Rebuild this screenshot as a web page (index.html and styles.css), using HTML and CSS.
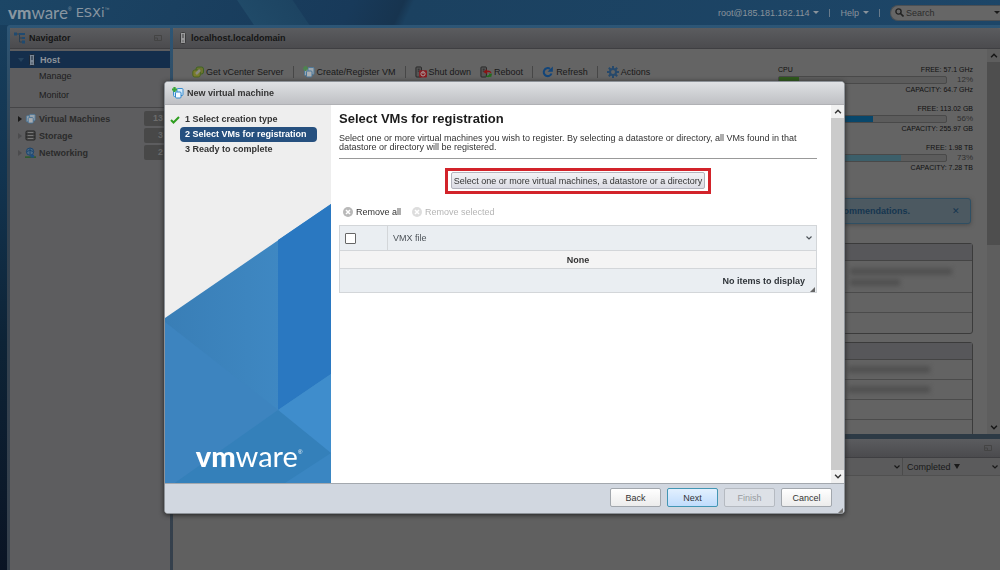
FILE: index.html
```html
<!DOCTYPE html>
<html lang="en">
<head>
<meta charset="utf-8">
<title>VMware ESXi</title>
<link rel="stylesheet" href="styles.css">
</head>
<body>
<svg class="defs" aria-hidden="true">
  <symbol id="i-vm" viewBox="0 0 12 12">
    <rect x="1.500" y="3" width="5.500" height="6.500" rx="1" fill="#cfe6f7" stroke="#3b8fd0"/>
    <rect x="5" y="1.500" width="6" height="7" rx="1" fill="#d6ebfa" stroke="#3b8fd0"/>
    <rect x="3.500" y="5" width="5.500" height="6" rx="1" fill="#f4faff" stroke="#2f86cc"/>
  </symbol>
  <symbol id="i-vm-new" viewBox="0 0 12 12">
    <use href="#i-vm"/>
    <path d="M2.500 0v5M0 2.500h5" stroke="#37a537" stroke-width="2.200"/>
  </symbol>
  <symbol id="i-host" viewBox="0 0 8 12">
    <rect x="1.500" y=".5" width="5" height="11" rx="1" fill="#ddd" stroke="#222"/>
    <path d="M3 3h2M3 5h2M3.500 9h1" stroke="#222"/>
  </symbol>
  <symbol id="i-chev" viewBox="0 0 8 6">
    <path d="M1.500 1.500L4 4l2.500-2.500" fill="none" stroke="currentColor" stroke-width="1.200"/>
  </symbol>
  <symbol id="i-x" viewBox="0 0 10 10">
    <circle cx="5" cy="5" r="5" fill="currentColor"/>
    <path d="M3 3l4 4M7 3L3 7" stroke="#fff" stroke-width="1.500"/>
  </symbol>
  <symbol id="i-window" viewBox="0 0 8 8">
    <path d="M.5 1.500h7v5h-7zM.5 4h3v2.500" fill="none" stroke="currentColor"/>
  </symbol>
  <symbol id="i-grip" viewBox="0 0 5 5"><path d="M5 0v5H0z" fill="currentColor"/></symbol>
</svg>

<div class="app">
  <header class="topbar">
    <div class="brand"><span class="wordmark"><b>vm</b>ware</span><sup>®</sup><span class="product">ESXi</span><sup>™</sup></div>
    <nav class="usernav">
      <button class="linkbtn">root@185.181.182.114 <i class="caret"></i></button>
      <span class="bar"></span>
      <button class="linkbtn">Help <i class="caret"></i></button>
      <span class="bar"></span>
    </nav>
    <label class="search">
      <svg width="9" height="9" viewBox="0 0 9 9"><circle cx="3.500" cy="3.500" r="2.600" fill="none" stroke="#222" stroke-width="1.400"/><path d="M5.500 5.500L8.500 8.500" stroke="#222" stroke-width="1.600"/></svg>
      <input type="text" placeholder="Search" aria-label="Search">
      <i class="caret dark"></i>
    </label>
  </header>

  <div class="frame">
    <aside class="navigator">
      <h2 class="panel-head">
        <svg width="12" height="12" viewBox="0 0 12 12"><path d="M2 2h6M5.500 2v8h3M5.500 6h3" fill="none" stroke="#2b3f50"/><path d="M0 .5h3v3H0zM5 1h6v2H5zM8 5h3v2H8zM8 8.500h3v3H8z" fill="#1f4a70"/></svg>
        Navigator
        <svg class="push" width="8" height="8"><use href="#i-window"/></svg>
      </h2>
      <ul class="tree">
        <li class="node selected"><i class="tri down"></i><svg class="dim" width="8" height="12"><use href="#i-host"/></svg><a>Host</a></li>
        <li class="leaf"><a>Manage</a></li>
        <li class="leaf"><a>Monitor</a></li>
      </ul>
      <ul class="tree groups">
        <li class="node"><i class="tri"></i><svg class="dim" width="11" height="11"><use href="#i-vm"/></svg><a>Virtual Machines</a><span class="count">13</span></li>
        <li class="node"><i class="tri faint"></i><svg width="11" height="11" viewBox="0 0 11 11"><rect x="1" y="1" width="9" height="9" rx="1" fill="#555" stroke="#222"/><path d="M1 4h9M1 7h9" stroke="#222"/><path d="M3 2.500h5M3 5.500h5M3 8.500h5" stroke="#777"/></svg><a>Storage</a><span class="count">3</span></li>
        <li class="node"><i class="tri faint"></i><svg width="11" height="12" viewBox="0 0 12 12"><circle cx="5.500" cy="4.500" r="4" fill="#4b6a86" stroke="#17426b"/><path d="M2 4.500q3-3 7 0M5.500 1v7" fill="none" stroke="#17426b"/><path d="M0 10.500h12" stroke="#255a25" stroke-width="1.500"/><path d="M6 8h4v3H6z" fill="#1f4e80"/></svg><a>Networking</a><span class="count">2</span></li>
      </ul>
    </aside>

    <main class="main">
      <h1 class="panel-head"><svg class="dim" width="8" height="12"><use href="#i-host"/></svg><span>localhost.localdomain</span></h1>
      <div class="workspace">
        <div class="scroll">
          <div class="overview">
            <div class="toolbar">
              <button><svg width="12" height="12" viewBox="0 0 12 12"><rect x="4" y="1" width="7.500" height="7" rx="2" fill="#6d7430" stroke="#3f6322"/><rect x=".8" y="4" width="7.500" height="7" rx="2" fill="#7a7c2c" stroke="#4a6420"/><path d="M4 8l4-4" stroke="#8a8a80" stroke-width="2.500"/></svg>Get vCenter Server</button>
              <span class="bar"></span>
              <button><svg class="dim" width="12" height="12"><use href="#i-vm-new"/></svg>Create/Register VM</button>
              <span class="bar"></span>
              <button><svg width="12" height="12" viewBox="0 0 13 12"><rect x="1" y=".5" width="6" height="11" rx="1" fill="#555" stroke="#252525"/><path d="M3 3h2M3 5h2" stroke="#252525"/><rect x="4.500" y="4" width="8.500" height="8" rx="1" fill="#8a1b20"/><circle cx="8.700" cy="8" r="2.300" fill="none" stroke="#aaa"/><path d="M8.700 5.500v2.500" stroke="#aaa"/></svg>Shut down</button>
              <button><svg width="12" height="12" viewBox="0 0 13 12"><rect x="1" y=".5" width="6" height="11" rx="1" fill="#555" stroke="#252525"/><path d="M3 3h2M3 5h2" stroke="#252525"/><path d="M3.500 6l3.500-3 .5 1.500c2.500-.5 4.500.5 5 3-2-1.500-3-1.500-5-1l.5 2z" fill="#8a1414"/><path d="M5 9q2 2 5 0l-.5-1.500L13 8l-1 4-1-1c-2 1-4 1-6-2z" fill="#236b1d"/></svg>Reboot</button>
              <span class="bar"></span>
              <button><svg width="12" height="12" viewBox="0 0 12 12"><path d="M9.500 7.500A4 4 0 1 1 8 2.800" fill="none" stroke="#12457a" stroke-width="2"/><path d="M10.800.5v5.300H5.500z" fill="#12457a"/></svg>Refresh</button>
              <span class="bar"></span>
              <button><svg width="12" height="12" viewBox="0 0 12 12"><path d="M6 0v12M0 6h12M1.800 1.800l8.400 8.400M10.200 1.800l-8.400 8.400" stroke="#27496b" stroke-width="2"/><circle cx="6" cy="6" r="3" fill="#646464" stroke="#27496b" stroke-width="2"/></svg>Actions</button>
            </div>
            <div class="meters">
              <div class="meter"><div class="mrow"><span>CPU</span><span>FREE: 57.1 GHz</span></div><div class="mbar"><div class="track"><div class="fill green" style="width:12%"></div></div><span>12%</span></div><div class="mrow end"><span>CAPACITY: 64.7 GHz</span></div></div>
              <div class="meter"><div class="mrow end"><span>FREE: 113.02 GB</span></div><div class="mbar"><div class="track"><div class="fill blue" style="width:56%"></div></div><span>56%</span></div><div class="mrow end"><span>CAPACITY: 255.97 GB</span></div></div>
              <div class="meter"><div class="mrow end"><span>FREE: 1.98 TB</span></div><div class="mbar"><div class="track"><div class="fill teal" style="width:73%"></div></div><span>73%</span></div><div class="mrow end"><span>CAPACITY: 7.28 TB</span></div></div>
            </div>
          </div>
          <div class="notice"><span>commendations.</span><button aria-label="Dismiss">✕</button></div>
          <section class="card"><div class="card-head"></div><div class="row tall"><i class="smear wide"></i><i class="smear"></i></div><div class="row"></div><div class="row"></div></section>
          <section class="card"><div class="card-head"></div><div class="row"><i class="smear mid"></i></div><div class="row"><i class="smear mid"></i></div><div class="row"></div><div class="row"></div></section>
        </div>
        <div class="vscroll dimmed"><svg class="up" width="10" height="7"><use href="#i-chev"/></svg><div class="thumb"></div><svg width="10" height="7"><use href="#i-chev"/></svg></div>
      </div>
      <section class="tasks">
        <div class="panel-head tasks-head"><svg class="push" width="8" height="8"><use href="#i-window"/></svg></div>
        <div class="tasks-cols"><div class="tcol first"><svg width="8" height="6"><use href="#i-chev"/></svg></div><div class="tcol"><span class="sorted">Completed <i class="caret dark"></i></span><svg width="8" height="6"><use href="#i-chev"/></svg></div></div>
      </section>
    </main>
  </div>
</div>

<div class="overlay">
  <div class="dialog" role="dialog" aria-labelledby="dlg-title">
    <div class="dialog-head" id="dlg-title"><svg width="12" height="12"><use href="#i-vm-new"/></svg>New virtual machine</div>
    <div class="dialog-body">
      <div class="wizard">
        <ol class="steps">
          <li><svg width="10" height="8" viewBox="0 0 10 8"><path d="M1 4l2.500 2.500L9 1" fill="none" stroke="#2e9e1f" stroke-width="2"/></svg><span>1 Select creation type</span></li>
          <li class="active"><span>2 Select VMs for registration</span></li>
          <li><span>3 Ready to complete</span></li>
        </ol>
        <div class="art">
          <svg viewBox="0 0 166 279" preserveAspectRatio="none">
            <defs><linearGradient id="g1"><stop offset="0" stop-color="#397eb6"/><stop offset="1" stop-color="#418cc8"/></linearGradient></defs>
            <path d="M0 114L166 0V279H0z" fill="url(#g1)"/>
            <path d="M0 118L113 206 10 279H0z" fill="#3d84bf"/>
            <path d="M113 36L166 0V170L113 206z" fill="#2a78c1"/>
            <path d="M113 206L166 170V249z" fill="#3f8dcc"/>
            <path d="M113 206L166 249V279H10z" fill="#3480ba"/>
            <path d="M166 249V279H120z" fill="#3a86c2"/>
          </svg>
          <div class="artlogo"><span class="wordmark"><b>vm</b>ware</span><sup>®</sup></div>
        </div>
      </div>
      <div class="pane">
        <h3>Select VMs for registration</h3>
        <p>Select one or more virtual machines you wish to register. By selecting a datastore or directory, all VMs found in that datastore or directory will be registered.</p>
        <div class="highlight"><button class="pick">Select one or more virtual machines, a datastore or a directory</button></div>
        <div class="actions">
          <button><svg width="10" height="10"><use href="#i-x"/></svg>Remove all</button>
          <button disabled><svg width="10" height="10"><use href="#i-x"/></svg>Remove selected</button>
        </div>
        <table class="grid">
          <thead><tr><th class="check"><input type="checkbox" aria-label="Select all"></th><th><div class="th"><span>VMX file</span><svg width="8" height="6"><use href="#i-chev"/></svg></div></th></tr></thead>
          <tbody><tr><td colspan="2">None</td></tr></tbody>
          <tfoot><tr><td colspan="2"><div class="tf"><span>No items to display</span><svg width="5" height="5"><use href="#i-grip"/></svg></div></td></tr></tfoot>
        </table>
      </div>
      <div class="vscroll"><svg class="up" width="10" height="7"><use href="#i-chev"/></svg><div class="thumb full"></div><svg width="10" height="7"><use href="#i-chev"/></svg></div>
    </div>
    <div class="dialog-foot">
      <button>Back</button><button class="primary">Next</button><button disabled>Finish</button><button>Cancel</button>
      <svg class="grip" width="5" height="5"><use href="#i-grip"/></svg>
    </div>
  </div>
</div>
</body>
</html>
```
FILE: styles.css
```css
* { box-sizing: border-box; }
body { margin: 0; font: 9px/12px "Liberation Sans", Arial, sans-serif; color: #191919; overflow: hidden; }
h1, h2, h3, p, ul, ol { margin: 0; padding: 0; font-size: inherit; }
ul, ol { list-style: none; }
button { font: inherit; color: inherit; background: none; border: 0; padding: 0; white-space: nowrap; }
svg { flex: none; display: block; }
.defs { position: absolute; width: 0; height: 0; }
.dim { opacity: .5; }
.push { margin-left: auto; color: #444; }

.app { height: 100vh; display: flex; flex-direction: column; background: linear-gradient(#19405f, #123450 30%, #0d2336 60%, #0a1424); }

/* top bar */
.topbar { flex: none; height: 25px; display: flex; align-items: center; padding-left: 8px; background: linear-gradient(56deg, transparent 210px, #204a68 211px, #1d4462 256px, transparent 257px), linear-gradient(115deg, #1c4666, #183a5a 35%, #17344f 40%, #1b4160 41%, #1d4668); color: #8a939b; }
.brand { display: flex; align-items: center; flex: 1; color: #8996a1; }
.wordmark { font-family: Lato, sans-serif; font-size: 17px; line-height: 20px; }
.wordmark b { font-weight: 900; }
.brand sup { font-size: 5px; line-height: 5px; align-self: flex-start; padding-top: 4px; }
.product { font: 13px/20px "DejaVu Sans", sans-serif; margin-left: 4px; }
.usernav { display: flex; align-items: center; gap: 10px; padding-right: 10px; }
.linkbtn { display: flex; align-items: center; gap: 4px; }
.caret { width: 0; border: 3px solid transparent; border-top-color: currentColor; border-bottom: 0; }
.caret.dark { color: #1a1a1a; }
.bar { width: 1px; height: 8px; background: currentColor; opacity: .7; }
.search { display: flex; align-items: center; gap: 2px; width: 110px; height: 16px; padding-left: 4px; background: #666; border: 1px solid #4a4f54; border-right: 0; border-radius: 8px 0 0 8px; }
.search input { flex: 1; min-width: 0; border: 0; padding: 0; background: none; outline: 0; font: inherit; color: #222; }
.search input::placeholder { color: #2c2c2c; opacity: 1; }

/* frame */
.frame { flex: 1; min-height: 0; margin-left: 7px; padding: 3px 0 0 3px; border-radius: 3px 0 0 0; background: linear-gradient(#2d5676, #33414e 25%, #35404c); display: grid; grid-template-columns: 160px 1fr; gap: 3px; }
.panel-head { height: 21px; display: flex; align-items: center; gap: 3px; padding: 0 8px 0 4px; background: linear-gradient(#5b5c5f, #4b4b4e); border-bottom: 1px solid #3f3f42; font-weight: bold; color: #151515; border-radius: 3px 3px 0 0; }
.main .panel-head { gap: 4px; padding-left: 6px; }
.navigator { background: #5d5d5f; min-width: 0; overflow: hidden; }
.tree { padding-top: 2px; }
.node { height: 17px; display: flex; align-items: center; gap: 3px; padding-left: 8px; font-weight: bold; color: #2b2b2b; }
.node.selected { background: #142e4c; color: #8f949a; gap: 4px; }
.tri { width: 4px; border: 3px solid transparent; border-left: 4px solid #1a1a1a; border-right: 0; }
.tri.down { width: 6px; border: 3px solid transparent; border-top: 4px solid #26435e; border-bottom: 0; }
.tri.faint { border-left-color: #4c4c4e; }
.leaf { height: 19px; padding: 2px 0 0 29px; color: #1c1c1c; }
.groups { margin-top: 1px; border-top: 1px solid #454547; }
.count { margin-left: auto; width: 26px; height: 15px; padding-right: 7px; text-align: right; line-height: 15px; background: #484848; color: #6d6d6d; border-radius: 2px; }

/* main area */
.main { min-width: 0; display: flex; flex-direction: column; background: #606060; }
.workspace { height: 385px; display: flex; background: #646464; }
.scroll { flex: 1; min-width: 0; overflow: hidden; padding: 16px 14px 0 19px; }
.overview { display: flex; justify-content: space-between; }
.toolbar { display: flex; align-items: center; gap: 9px; height: 14px; }
.toolbar button { display: flex; align-items: center; gap: 2px; }
.toolbar .bar { height: 12px; background: #3a3a3a; }
.meters { width: 195px; display: grid; gap: 9px; }
.meter { height: 30px; display: grid; grid-template-rows: 9px 11px 10px; font-size: 7px; line-height: 9px; color: #111; }
.mrow { display: flex; justify-content: space-between; }
.mrow.end { justify-content: flex-end; }
.mbar { display: flex; align-items: center; gap: 10px; font-size: 8px; color: #2f2f2f; }
.track { flex: 1; height: 8px; background: #5c5c5c; border: 1px solid #494949; border-radius: 2px; }
.fill { height: 6px; }
.green { background: #2f5a1c; }
.blue { background: #08476b; }
.teal { background: #3c5f6a; }
.notice { height: 26px; margin: 25px 2px 19px 0; padding: 0 10px 0 0; display: flex; align-items: center; justify-content: flex-end; gap: 42px; background: #4c5961; border: 1px solid #2f4f63; border-radius: 3px; box-shadow: 0 1px 4px #4a4a4a; color: #163650; font-weight: bold; }
.notice button { font-weight: normal; }
.card { margin-bottom: 8px; border: 1px solid #3b3b3b; border-radius: 3px; background: #636363; }
.card-head { height: 17px; background: #57575a; border-bottom: 1px solid #444; }
.row { height: 20px; border-bottom: 1px solid #4b4b4b; display: flex; flex-direction: column; align-items: flex-end; justify-content: center; gap: 4px; }
.row:last-child { border-bottom: 0; }
.row.tall { height: 32px; }
.smear { width: 50px; height: 7px; margin-right: 72px; background: #515151; filter: blur(2px); }
.smear.wide { width: 102px; margin-right: 20px; }
.smear.mid { width: 82px; margin-right: 42px; }
.tasks { flex: 1; border-top: 5px solid #2d3a45; }
.tasks-head { height: 19px; border-radius: 0; }
.tasks-cols { display: flex; justify-content: flex-end; height: 18px; border-bottom: 1px solid #505050; background: #5b5b5c; }
.tcol { width: 98px; padding: 0 1px 0 4px; display: flex; align-items: center; justify-content: space-between; border-left: 1px solid #4b4b4b; }
.tcol.first { flex: 1; justify-content: flex-end; border-left: 0; }
.sorted { display: flex; align-items: center; gap: 3px; }
.sorted .caret { border-top-width: 5px; }

/* scroll bars */
.vscroll { flex: none; width: 13px; display: flex; flex-direction: column; align-items: center; background: #f1f1f1; color: #333; padding: 3px 0; gap: 3px; }
.vscroll .up { transform: rotate(180deg); }
.vscroll .thumb { width: 100%; height: 183px; background: #4e4e4e; margin-bottom: auto; }
.vscroll .thumb.full { flex: 1; height: auto; background: #cbcbcb; }
.vscroll.dimmed { background: #5e5e5e; color: #151515; }

/* dialog */
.overlay { position: fixed; inset: 0; padding: 81px 155px 56px 164px; display: flex; }
.dialog { flex: 1; min-width: 0; display: flex; flex-direction: column; border: 1px solid #8d9298; border-radius: 4px; overflow: hidden; background: #fff; box-shadow: 0 1px 5px #222; color: #333; }
.dialog-head { flex: none; height: 23px; display: flex; align-items: center; gap: 3px; padding-left: 7px; background: linear-gradient(#dfe1e4, #bfc0c4); border-bottom: 1px solid #b0b1b5; font-weight: bold; }
.dialog-body { flex: 1; min-height: 0; display: flex; }
.wizard { width: 166px; flex: none; display: flex; flex-direction: column; background: #eee; }
.steps { padding: 7px 14px 0 5px; font-weight: bold; line-height: 15px; white-space: nowrap; flex: 1; }
.steps li { display: flex; align-items: center; height: 15px; }
.steps span { flex: 1; padding-left: 5px; }
.steps li:not(.active) > span:first-child, .steps .active span { margin-left: 10px; }
.steps .active span { background: #26507f; color: #fff; border-radius: 4px; }
.art { display: grid; height: 279px; }
.art > * { grid-area: 1 / 1; }
.art svg { width: 100%; height: 100%; }
.artlogo { align-self: end; display: flex; justify-content: center; padding: 0 0 9px 2px; color: #fff; }
.artlogo .wordmark { font-size: 29px; line-height: 36px; }
.artlogo sup { font-size: 6px; line-height: 6px; padding-top: 11px; }
.pane { flex: 1; min-width: 0; padding: 6px 14px 0 8px; }
.pane h3 { font-size: 13px; line-height: 15px; color: #1c1c1c; }
.pane p { margin-top: 8px; padding-bottom: 6px; line-height: 9px; border-bottom: 1px solid #999; }
.highlight { width: 266px; margin: 9px auto 0; border: 3px solid #d2232a; padding: 1px 0 2px; display: flex; justify-content: center; }
.pick { height: 17px; padding: 0 2px; background: linear-gradient(#f2f2f5, #dcdce4); border: 1px solid #b3b3bd; border-radius: 2px; }
.actions { display: flex; gap: 11px; padding: 11px 0 6px 4px; }
.actions button { display: flex; align-items: center; gap: 3px; height: 14px; }
.actions svg { color: #b9b9b9; }
.actions button:disabled { color: #b5b5b5; }
.actions button:disabled svg { color: #ddd; }
.grid { width: 100%; border-collapse: collapse; border: 1px solid #d3d6d9; background: #eaeef2; }
.grid th { height: 25px; padding: 0 3px 0 5px; text-align: left; font-weight: normal; border-right: 1px solid #d3d6d9; color: #4d5359; }
.grid th.check { width: 48px; }
.grid input { display: block; appearance: none; width: 11px; height: 11px; margin: 0; border: 1px solid #666; border-radius: 1px; background: #fff; }
.th { display: flex; align-items: center; justify-content: space-between; }
.grid td { padding: 0; font-weight: bold; border-top: 1px solid #d3d6d9; }
.grid tbody td { height: 18px; text-align: center; background: #f4f4f4; }
.tf { height: 23px; display: flex; align-items: center; justify-content: flex-end; gap: 5px; color: #2f3439; }
.tf svg { align-self: flex-end; color: #666; margin-right: 1px; }
.dialog-foot { flex: none; height: 30px; padding: 0 1px 0 0; display: flex; align-items: center; justify-content: flex-end; gap: 6px; background: #d1d7e0; border-top: 1px solid #a3a8ae; }
.dialog-foot button { width: 51px; height: 19px; margin-bottom: 2px; background: linear-gradient(#fff, #ececec); border: 1px solid #a2a7ad; border-radius: 2px; }
.dialog-foot .primary { background: linear-gradient(#e2f0fe, #c0dcfc); border-color: #4296b4; }
.dialog-foot button:disabled { background: #dde1e7; border-color: #b5bac1; color: #979b9f; }
.grip { align-self: flex-end; color: #777; }
```
